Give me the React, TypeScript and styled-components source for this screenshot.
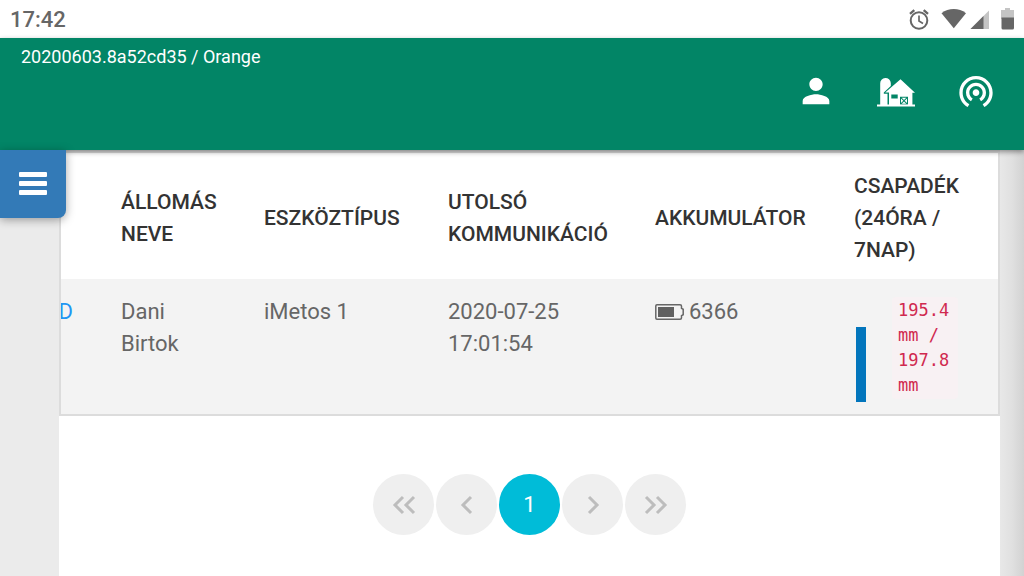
import React from "react";
import styled, { createGlobalStyle, css } from "styled-components";

const GlobalStyle = createGlobalStyle`
  *, *::before, *::after { box-sizing: border-box; }
  body {
    margin: 0;
    background: #ebebeb;
    color: #666;
    font-family: Roboto, "Liberation Sans", sans-serif;
    font-size: 22px;
    line-height: 32px;
    overflow: hidden;
  }
  button { font: inherit; border: 0; padding: 0; cursor: pointer; }
`;

const Page = styled.div`
  display: flex;
  flex-direction: column;
  min-height: 100vh;
`;

const StatusBar = styled.div`
  display: flex;
  align-items: center;
  justify-content: space-between;
  height: 38px;
  padding: 2px 8px 0 10px;
  background: #fff;
  color: #666;
  font-weight: 500;
`;

const StatusIcons = styled.svg`
  display: block;
  width: 108px;
  height: 24px;
  fill: #666;
`;

const AppBar = styled.header`
  position: relative;
  z-index: 1;
  display: flex;
  justify-content: space-between;
  height: 112px;
  padding: 7px 8px 0 21px;
  background: #028566;
  box-shadow: 0 2px 5px rgba(0, 0, 0, 0.4);
`;

const Version = styled.div`
  color: #fff;
  font-size: 18px;
  line-height: 24px;
`;

const Actions = styled.nav`
  display: flex;
  padding-top: 6px;
`;

const ActionButton = styled.button`
  display: grid;
  place-items: center;
  width: 80px;
  height: 80px;
  background: transparent;

  svg { width: 40px; height: 40px; fill: #fff; }
`;

const MenuButton = styled.button`
  position: absolute;
  top: 100%;
  left: 0;
  display: grid;
  place-items: center;
  width: 66px;
  height: 68px;
  border-radius: 0 0 8px 0;
  background: #337ab7;
  box-shadow: 0 2px 10px rgba(0, 0, 0, 0.35);

  svg { width: 28px; height: 24px; fill: #fff; }
`;

const Content = styled.div`
  flex: 1;
  display: flex;
  padding-left: 59px;
`;

const Paper = styled.main`
  flex: 1;
  min-width: 0;
  background: #fff;
`;

const EdgeShade = styled.div`
  width: 24px;
  background: linear-gradient(to right, #e8e8e8, #e0e0e0 50%, #d2d2d2);
`;

const TableFrame = styled.div`
  border: solid #dcdcdc;
  border-width: 3px 2px 2px;
  overflow: hidden;
`;

const StationTable = styled.table`
  width: 100%;
  table-layout: fixed;
  border-collapse: collapse;
`;

const Column = styled.col<{ $width?: number }>`
  width: ${(p) => (p.$width ? `${p.$width}px` : "auto")};
`;

const HeadCell = styled.th`
  padding: 17px 24px 13px;
  color: #333;
  font-size: 21px;
  font-weight: 500;
  text-align: left;
  text-transform: uppercase;
  vertical-align: middle;
  background: #fff;
`;

const Cell = styled.td<{ $clipped?: boolean }>`
  height: 135px;
  padding: 17px 24px 12px;
  vertical-align: top;
  background: #f3f3f3;
  ${(p) => p.$clipped && css`
    padding-left: 0;
  `}
`;

const LinkClip = styled.div`
  display: flex;
  justify-content: flex-end;
  overflow: hidden;
`;

const StationLink = styled.a`
  color: #2196f3;
  text-decoration: none;
`;

const Battery = styled.div`
  display: flex;
  align-items: center;
  gap: 5px;

  svg { width: 29px; height: 16px; }
`;

const Rain = styled.div`
  display: flex;
  gap: 26px;
  padding-left: 2px;
`;

const RainBar = styled.div`
  width: 10px;
  height: 75px;
  margin-top: 31px;
  background: #0275bc;
`;

const RainValue = styled.code`
  align-self: flex-start;
  width: 66px;
  margin-top: 1px;
  padding: 1px 6px;
  border-radius: 4px;
  background: #f8f1f3;
  color: #d0294f;
  font-family: "DejaVu Sans Mono", monospace;
  font-size: 17px;
  line-height: 25px;
`;

const Pagination = styled.nav`
  display: flex;
  justify-content: center;
  gap: 2px;
  padding: 58px 0 40px;
`;

const PageButton = styled.button<{ $active?: boolean }>`
  display: grid;
  place-items: center;
  width: 61px;
  height: 61px;
  border-radius: 50%;
  background: ${(p) => (p.$active ? "#00bcd8" : "#efefef")};
  color: #fff;

  svg {
    width: 24px;
    height: 20px;
    fill: none;
    stroke: #bdbdbd;
    stroke-width: 3;
  }
`;

const PersonIcon = () => (
  <svg viewBox="0 0 24 24" aria-hidden="true">
    <path d="M12 12c2.21 0 4-1.79 4-4s-1.79-4-4-4-4 1.79-4 4 1.79 4 4 4zm0 2c-2.67 0-8 1.34-8 4v2h16v-2c0-2.66-5.33-4-8-4z" />
  </svg>
);

const FarmIcon = () => (
  <svg viewBox="0 0 40 40" aria-hidden="true">
    <path d="M1 33.500h38V35.500H1z" />
    <path d="M4.200 34V12.500a5.300 5.300 0 0 1 10.600-.6v3L7.800 21.400v1.300h3.700V34z" />
    <path fillRule="evenodd" d="M24.500 8.200L39 21.800h-2.600V34H13V21.500H9.200zM15.300 23.400v4.200h6.400v-4.200zM24 25.700v8h8v-8z" />
    <path d="M25.700 26.700h4.600L28 28.900zM25.700 32.700h4.600L28 30.500zM25 27.400l2.300 2.300-2.300 2.300zM31 27.400L28.700 29.700l2.300 2.300z" />
  </svg>
);

const TetherIcon = () => (
  <svg viewBox="0 0 24 24" aria-hidden="true">
    <path d="M12 11c-1.100 0-2 .9-2 2s.9 2 2 2 2-.9 2-2-.9-2-2-2zm6 2c0-3.310-2.690-6-6-6s-6 2.690-6 6c0 2.220 1.210 4.150 3 5.190l1-1.740c-1.190-.7-2-1.970-2-3.450 0-2.210 1.790-4 4-4s4 1.790 4 4c0 1.480-.81 2.750-2 3.450l1 1.740c1.790-1.040 3-2.970 3-5.190zM12 3C6.480 3 2 7.480 2 13c0 3.700 2.010 6.920 4.990 8.650l1-1.730C5.610 18.530 4 15.960 4 13c0-4.420 3.580-8 8-8s8 3.580 8 8c0 2.960-1.610 5.530-4 6.920l1 1.730c2.990-1.730 5-4.950 5-8.650 0-5.520-4.480-10-10-10z" />
  </svg>
);

const DeviceStatus = () => (
  <StatusIcons viewBox="0 0 108 24" role="img" aria-label="Alarm, Wi-Fi, signal, battery">
    <g fill="none" stroke="#666" strokeWidth="2">
      <circle cx="11" cy="12.500" r="8.300" />
      <path d="M11 7.500V13l4 2.400" strokeWidth="1.700" />
      <path d="M2 5.800L6.300 2.200M20 5.800L15.700 2.200" strokeWidth="2.400" />
    </g>
    <path d="M33.500 5.200C40.500-.4 51-.4 58 5.200L45.800 20.200z" />
    <path d="M81 2.400V21H62.500z" fill="#c4c4c4" />
    <path d="M75.500 7.900V21h-13z" />
    <path d="M97 0h5v2h4v9H93V2h4z" fill="#c4c4c4" />
    <path d="M93.500 9.500H106V20q0 1.500-1.500 1.500h-9.500q-1.500 0-1.500-1.500z" />
  </StatusIcons>
);

const columns = [
  { title: "", width: 36 },
  { title: "Állomás neve", width: 143 },
  { title: "Eszköztípus", width: 184 },
  { title: "Utolsó kommunikáció", width: 207 },
  { title: "Akkumulátor", width: 199 },
  { title: "Csapadék (24óra / 7nap)" },
];

const pageSteps = {
  first: "M11 2L3 10l8 8M22 2l-8 8 8 8",
  previous: "M16 2L8 10l8 8",
  next: "M8 2l8 8-8 8",
  last: "M2 2l8 8-8 8M13 2l8 8-8 8",
};

const StepButton = ({ label, path }: { label: string; path: string }) => (
  <PageButton type="button" aria-label={label}>
    <svg viewBox="0 0 24 20" aria-hidden="true"><path d={path} /></svg>
  </PageButton>
);

export default function App() {
  return (
    <Page>
      <GlobalStyle />
      <StatusBar>
        <span>17:42</span>
        <DeviceStatus />
      </StatusBar>

      <AppBar>
        <Version>20200603.8a52cd35 / Orange</Version>
        <Actions>
          <ActionButton type="button" aria-label="Profil"><PersonIcon /></ActionButton>
          <ActionButton type="button" aria-label="Birtok"><FarmIcon /></ActionButton>
          <ActionButton type="button" aria-label="Állomások"><TetherIcon /></ActionButton>
        </Actions>
        <MenuButton type="button" aria-label="Menü">
          <svg viewBox="0 0 28 24" aria-hidden="true">
            <rect y="0" width="28" height="5" rx="1" />
            <rect y="9" width="28" height="5" rx="1" />
            <rect y="18" width="28" height="5" rx="1" />
          </svg>
        </MenuButton>
      </AppBar>

      <Content>
        <Paper>
          <TableFrame>
            <StationTable>
              <colgroup>
                {columns.map((c) => <Column key={c.title} $width={c.width} />)}
              </colgroup>
              <thead>
                <tr>
                  {columns.map((c) => <HeadCell key={c.title} scope="col">{c.title}</HeadCell>)}
                </tr>
              </thead>
              <tbody>
                <tr>
                  <Cell $clipped>
                    <LinkClip><StationLink href="#station">D</StationLink></LinkClip>
                  </Cell>
                  <Cell>Dani Birtok</Cell>
                  <Cell>iMetos 1</Cell>
                  <Cell>2020-07-25 17:01:54</Cell>
                  <Cell>
                    <Battery>
                      <svg viewBox="0 0 29 16" aria-hidden="true">
                        <path d="M2 .8h23q1.500 0 1.500 1.500v2l1.700 1v5.400l-1.700 1v2q0 1.500-1.500 1.500H2Q.8 15.200.8 14V2Q.8.8 2 .8z" fill="none" stroke="#666" strokeWidth="1.500" />
                        <path d="M3 3h16v10H3z" fill="#606060" />
                      </svg>
                      6366
                    </Battery>
                  </Cell>
                  <Cell>
                    <Rain>
                      <RainBar />
                      <RainValue>195.4 mm / 197.8 mm</RainValue>
                    </Rain>
                  </Cell>
                </tr>
              </tbody>
            </StationTable>
          </TableFrame>

          <Pagination aria-label="Lapozás">
            <StepButton label="Első oldal" path={pageSteps.first} />
            <StepButton label="Előző oldal" path={pageSteps.previous} />
            <PageButton type="button" $active aria-current="page">1</PageButton>
            <StepButton label="Következő oldal" path={pageSteps.next} />
            <StepButton label="Utolsó oldal" path={pageSteps.last} />
          </Pagination>
        </Paper>
        <EdgeShade />
      </Content>
    </Page>
  );
}
